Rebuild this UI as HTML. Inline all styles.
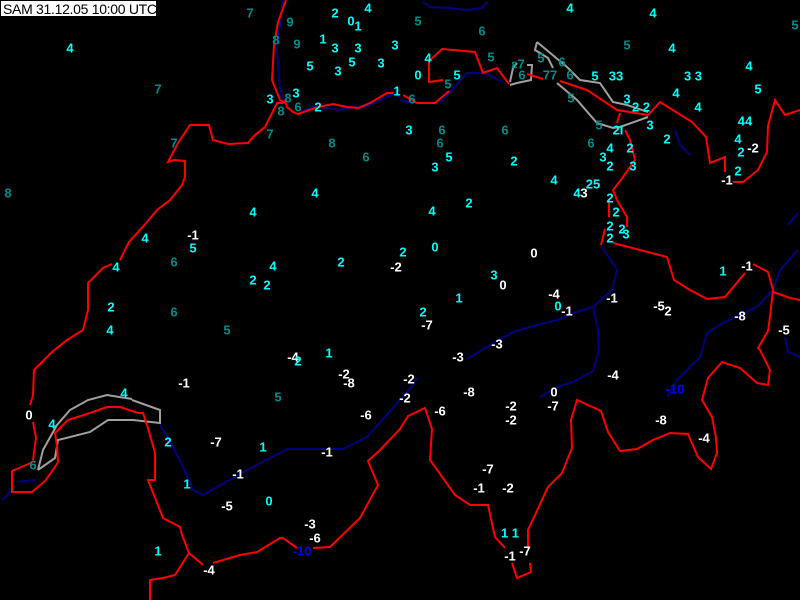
<!DOCTYPE html>
<html><head><meta charset="utf-8"><style>
html,body{margin:0;padding:0;background:#000;width:800px;height:600px;overflow:hidden}
svg{display:block}
text{font-family:"Liberation Sans",sans-serif;font-weight:bold;font-size:13px;text-anchor:middle;dominant-baseline:central}
.C{fill:#00ffff}.T{fill:#008c8c}.W{fill:#fff}.B{fill:#0000ff}
.r{fill:none;stroke:#ff0000;stroke-width:2}
.n{fill:none;stroke:#000080;stroke-width:2}
.g{fill:none;stroke:#a0a0a0;stroke-width:2}
</style></head><body>
<svg width="800" height="600" viewBox="0 0 800 600">
<rect width="800" height="600" fill="#000"/>
<polyline class="n" points="283,0 277,50 280,90 285,102"/>
<polyline class="n" points="300,112 315,106 340,110 370,105 395,93 400,98"/>
<polyline class="n" points="423,2 430,7 450,8 467,10 482,8 487,2"/>
<polyline class="n" points="400,100 412,103"/>
<polyline class="n" points="440,103 467,73 485,73 502,82"/>
<polyline class="n" points="602,247 617,270 612,290 593,307 573,313 557,320 537,325 513,332 490,345 467,359"/>
<polyline class="n" points="593,307 598,330 599,350 593,371 573,382 557,387 540,397"/>
<polyline class="n" points="417,378 413,385 400,400 367,437 343,449 287,449 253,467 233,478 203,495 193,490 183,467 173,447 160,425"/>
<polyline class="n" points="798,250 780,270 773,290 757,307 723,323 707,333 700,357 677,380 667,397"/>
<polyline class="n" points="788,225 798,213"/>
<polyline class="n" points="785,337 788,352 800,357"/>
<polyline class="n" points="2,500 12,490"/>
<polyline class="n" points="17,482 35,480"/>
<polyline class="n" points="675,130 680,145 690,155"/>
<polyline class="g" points="38,470 43,450 57,425 70,410 88,400 107,395 132,399"/>
<polyline class="g" points="38,470 55,458 58,440 90,432 108,420 133,420 160,423 160,410 132,400"/>
<polyline class="g" points="537,42 535,50 548,58 553,68"/>
<polyline class="g" points="537,42 567,67 580,80 600,83 613,102 627,105 648,112"/>
<polyline class="g" points="557,83 577,100 597,123 613,128 620,127 648,117"/>
<polyline class="g" points="510,82 513,68 517,63"/>
<polyline class="g" points="527,65 532,65 531,80 517,83 510,85"/>
<polyline class="r" points="286,0 278,22 274,45 272,80 280,100 285,103"/>
<polyline class="r" points="283,103 277,103 265,127 255,135 248,143 228,144 213,140 209,125 190,125 178,143 168,162 174,160 185,161 185,177 182,185 170,200 157,210 147,222 129,242 120,260"/>
<polyline class="r" points="112,264 103,268 88,283 88,310 83,330 67,340 52,352 34,370 33,395 30,405"/>
<polyline class="r" points="33,422 36,438 33,460"/>
<polyline class="r" points="33,462 12,471 12,492 32,492 45,481 55,467 58,462 57,446 55,433 68,420 90,413 107,407 120,407 138,413 143,413 148,428 155,453 155,480 148,480 163,518 180,527 182,535 189,553 175,575 163,578 150,580 150,600"/>
<polyline class="r" points="189,553 203,565"/>
<polyline class="r" points="213,563 240,555 257,552 280,538 283,538 297,548"/>
<polyline class="r" points="313,548 330,547 360,518 378,485 368,461 380,450 400,429 408,416 425,408 432,429 430,460 455,495 470,505 488,505 495,537 505,548"/>
<polyline class="r" points="512,563 517,578 531,572 530,563"/>
<polyline class="r" points="528,549 528,530 548,487 562,473 572,448 571,420 577,400 601,411 608,432 620,451 637,449 653,440 670,433 688,434 698,457 711,469 717,453 716,438 712,417 702,400 708,378 722,362 740,368 757,383 768,385 770,370 760,350 758,348 768,331 770,317 773,290 768,272 753,264"/>
<polyline class="r" points="773,292 790,298 800,300"/>
<polyline class="r" points="601,245 605,229"/>
<polyline class="r" points="609,217 609,200"/>
<polyline class="r" points="617,200 627,217 627,227"/>
<polyline class="r" points="613,243 667,257 674,280 690,290 707,299 725,297 745,273"/>
<polyline class="r" points="560,81 587,90 617,110 648,115 660,102 692,122 706,137 710,163 725,157 725,172"/>
<polyline class="r" points="620,113 617,123"/>
<polyline class="r" points="625,130 630,140 635,160 623,177 613,190 617,200"/>
<polyline class="r" points="733,182 743,182 758,170 767,152 768,126 775,100 785,115 800,110"/>
<polyline class="r" points="428,62 442,49 475,52 483,73 497,68 509,84"/>
<polyline class="r" points="429,62 429,82 443,80"/>
<polyline class="r" points="527,74 543,79"/>
<polyline class="r" points="449,91 435,103 417,103 403,95"/>
<polyline class="r" points="393,93 387,93 370,103 358,108 347,107 333,104 323,106 312,109 298,114 293,112 287,107 285,100"/>
<rect x="1" y="1" width="155" height="15" fill="#fff"/>
<text x="3" y="9" style="text-anchor:start;font-weight:normal;font-size:14px;letter-spacing:-0.3px;fill:#000">SAM 31.12.05 10:00 UTC</text>
<g>
<text class="T" x="250" y="13">7</text><text class="T" x="290" y="22">9</text><text class="C" x="335" y="13">2</text><text class="C" x="351" y="21">0</text><text class="C" x="358" y="26">1</text><text class="C" x="368" y="8">4</text><text class="T" x="418" y="21">5</text><text class="T" x="482" y="31">6</text><text class="C" x="570" y="8">4</text><text class="C" x="653" y="13">4</text><text class="T" x="795" y="25">5</text>
<text class="C" x="70" y="48">4</text><text class="T" x="276" y="40">8</text><text class="T" x="297" y="44">9</text><text class="C" x="323" y="39">1</text><text class="C" x="335" y="48">3</text><text class="C" x="358" y="48">3</text><text class="C" x="395" y="45">3</text><text class="C" x="310" y="66">5</text><text class="C" x="338" y="71">3</text><text class="C" x="352" y="62">5</text><text class="C" x="381" y="63">3</text><text class="C" x="428" y="58">4</text><text class="C" x="418" y="75">0</text><text class="C" x="457" y="75">5</text><text class="T" x="491" y="57">5</text><text class="T" x="448" y="84">5</text><text class="T" x="518" y="64">ε7</text><text class="T" x="541" y="58">5</text><text class="T" x="562" y="62">6</text><text class="T" x="522" y="75">6</text><text class="T" x="550" y="75">77</text><text class="T" x="570" y="75">6</text><text class="C" x="595" y="76">5</text><text class="C" x="616" y="76">33</text><text class="T" x="627" y="45">5</text><text class="C" x="672" y="48">4</text><text class="C" x="693" y="76">3 3</text><text class="C" x="749" y="66">4</text><text class="C" x="758" y="89">5</text>
<text class="T" x="158" y="89">7</text><text class="C" x="270" y="99">3</text><text class="T" x="288" y="98">8</text><text class="C" x="296" y="93">3</text><text class="T" x="298" y="107">6</text><text class="T" x="281" y="111">8</text><text class="C" x="318" y="107">2</text><text class="C" x="397" y="91">1</text><text class="T" x="412" y="99">6</text><text class="C" x="676" y="93">4</text><text class="C" x="627" y="99">3</text><text class="C" x="641" y="107">2 2</text><text class="T" x="571" y="98">5</text><text class="C" x="698" y="107">4</text><text class="C" x="745" y="121">44</text>
<text class="T" x="270" y="134">7</text><text class="T" x="174" y="143">7</text><text class="T" x="332" y="143">8</text><text class="C" x="409" y="130">3</text><text class="T" x="442" y="130">6</text><text class="T" x="505" y="130">6</text><text class="T" x="599" y="125">5</text><text class="C" x="618" y="130">2I</text><text class="C" x="650" y="125">3</text><text class="T" x="440" y="143">6</text><text class="T" x="366" y="157">6</text><text class="C" x="449" y="157">5</text><text class="C" x="435" y="167">3</text><text class="C" x="514" y="161">2</text><text class="T" x="591" y="143">6</text><text class="C" x="610" y="148">4</text><text class="C" x="630" y="148">2</text><text class="C" x="667" y="139">2</text><text class="C" x="738" y="139">4</text><text class="C" x="741" y="152">2</text><text class="W" x="753" y="148">-2</text><text class="C" x="603" y="157">3</text><text class="C" x="610" y="166">2</text><text class="C" x="633" y="166">3</text><text class="C" x="738" y="171">2</text><text class="W" x="727" y="180">-1</text>
<text class="T" x="8" y="193">8</text><text class="C" x="315" y="193">4</text><text class="C" x="554" y="180">4</text><text class="C" x="577" y="193">4</text><text class="W" x="584" y="193">3</text><text class="C" x="593" y="184">25</text><text class="C" x="469" y="203">2</text><text class="C" x="610" y="198">2</text><text class="C" x="253" y="212">4</text><text class="C" x="432" y="211">4</text><text class="C" x="616" y="212">2</text>
<text class="C" x="145" y="238">4</text><text class="W" x="193" y="235">-1</text><text class="C" x="193" y="248">5</text><text class="C" x="610" y="226">2</text><text class="C" x="622" y="229">2</text><text class="C" x="626" y="234">3</text><text class="C" x="610" y="238">2</text><text class="C" x="435" y="247">0</text><text class="C" x="403" y="252">2</text><text class="W" x="534" y="253">0</text><text class="T" x="174" y="262">6</text><text class="C" x="116" y="267">4</text><text class="C" x="273" y="266">4</text><text class="C" x="341" y="262">2</text><text class="W" x="396" y="267">-2</text><text class="C" x="723" y="271">1</text><text class="W" x="747" y="266">-1</text>
<text class="C" x="253" y="280">2</text><text class="C" x="267" y="285">2</text><text class="C" x="494" y="275">3</text><text class="W" x="503" y="285">0</text><text class="C" x="459" y="298">1</text><text class="W" x="554" y="294">-4</text><text class="W" x="612" y="298">-1</text><text class="C" x="558" y="306">0</text><text class="W" x="567" y="311">-1</text><text class="W" x="659" y="306">-5</text><text class="W" x="668" y="311">2</text><text class="C" x="111" y="307">2</text><text class="T" x="174" y="312">6</text><text class="C" x="423" y="312">2</text><text class="W" x="427" y="325">-7</text><text class="W" x="740" y="316">-8</text><text class="W" x="784" y="330">-5</text><text class="C" x="110" y="330">4</text><text class="T" x="227" y="330">5</text>
<text class="W" x="497" y="344">-3</text><text class="W" x="458" y="357">-3</text><text class="W" x="293" y="357">-4</text><text class="C" x="298" y="361">2</text><text class="C" x="329" y="353">1</text><text class="W" x="344" y="374">-2</text><text class="W" x="349" y="383">-8</text><text class="W" x="184" y="383">-1</text><text class="W" x="613" y="375">-4</text><text class="W" x="409" y="379">-2</text><text class="B" x="675" y="389">-10</text><text class="W" x="469" y="392">-8</text><text class="W" x="554" y="392">0</text><text class="C" x="124" y="393">4</text><text class="T" x="278" y="397">5</text><text class="W" x="405" y="398">-2</text><text class="W" x="511" y="406">-2</text><text class="W" x="553" y="406">-7</text>
<text class="W" x="29" y="415">0</text><text class="C" x="52" y="424">4</text><text class="W" x="366" y="415">-6</text><text class="W" x="440" y="411">-6</text><text class="W" x="511" y="420">-2</text><text class="W" x="661" y="420">-8</text><text class="C" x="168" y="442">2</text><text class="W" x="216" y="442">-7</text><text class="C" x="263" y="447">1</text><text class="W" x="327" y="452">-1</text><text class="W" x="704" y="438">-4</text><text class="T" x="33" y="465">6</text><text class="W" x="238" y="474">-1</text><text class="W" x="488" y="469">-7</text><text class="C" x="187" y="484">1</text><text class="W" x="479" y="488">-1</text><text class="W" x="508" y="488">-2</text>
<text class="W" x="227" y="506">-5</text><text class="C" x="269" y="501">0</text><text class="W" x="310" y="524">-3</text><text class="W" x="315" y="538">-6</text><text class="C" x="510" y="533">1 1</text><text class="C" x="158" y="551">1</text><text class="B" x="302" y="551">-10</text><text class="W" x="510" y="556">-1</text><text class="W" x="525" y="551">-7</text><text class="W" x="209" y="570">-4</text>
</g>
</svg>
</body></html>
